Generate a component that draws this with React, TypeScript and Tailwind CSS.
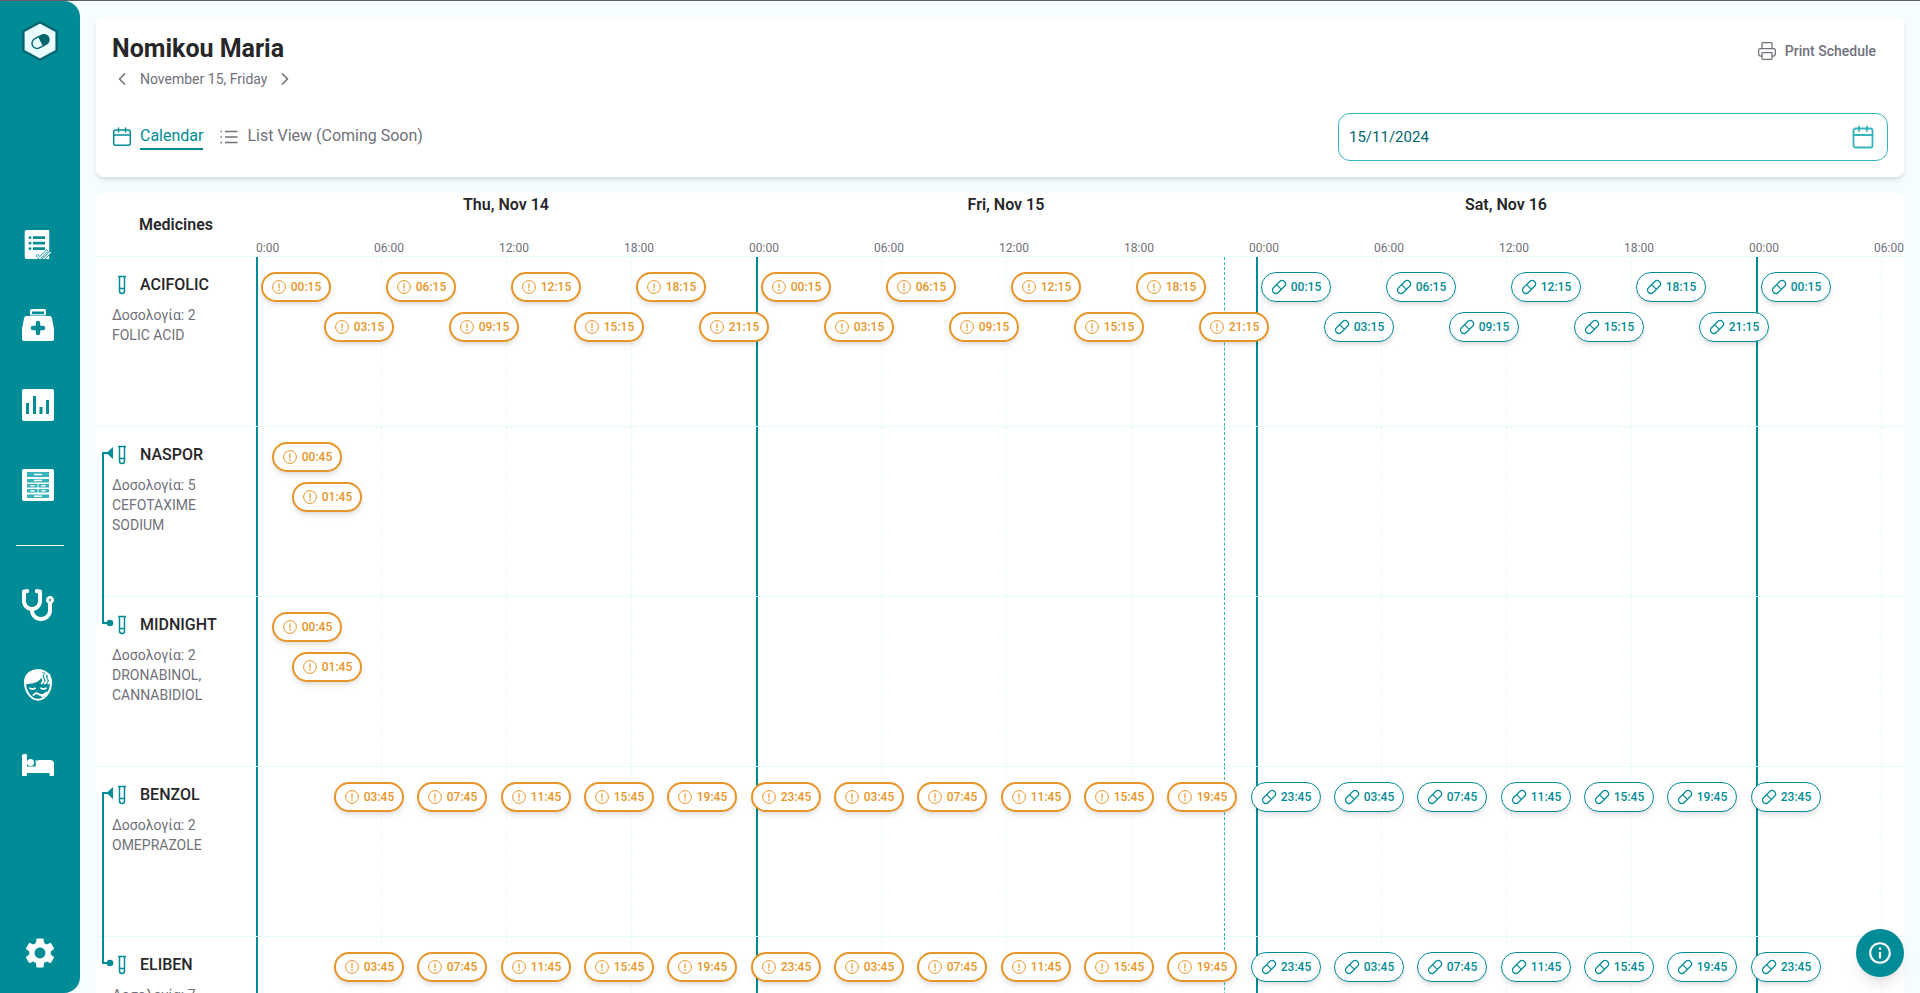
import { useState } from "react";
import { FaStethoscope } from "react-icons/fa";
import { MdInfoOutline, MdSettings } from "react-icons/md";
import { ChevronLeft, ChevronRight, Printer } from "lucide-react";

type Dose = {
    // hours since the start of the timeline
    at: number;
    level: number;
}

type Medicine = {
    name: string;
    dosage: number;
    substance: string;
    linked?: boolean;
    doses: Dose[];
}

const DAY_WIDTH = 500;
const NOW = 46.5;
const DAYS = ["Thu, Nov 14", "Fri, Nov 15", "Sat, Nov 16"];
const TICKS = Array.from({ length: 14 }, (_, i) => i * 6);

const every = (start: number, step: number, count: number, levels: number): Dose[] =>
    Array.from({ length: count }, (_, i) => ({ at: start + i * step, level: i % levels }));

const toX = (hours: number) => Math.round((hours * DAY_WIDTH) / 24);

const toTime = (hours: number) => {
    const h = Math.floor(hours) % 24;
    const m = Math.round((hours % 1) * 60);
    return `${String(h).padStart(2, "0")}:${String(m).padStart(2, "0")}`;
};

const MEDICINES: Medicine[] = [
    { name: "ACIFOLIC", dosage: 2, substance: "FOLIC ACID", doses: every(0.25, 3, 25, 2) },
    { name: "NASPOR", dosage: 5, substance: "CEFOTAXIME SODIUM", linked: true, doses: every(0.75, 1, 2, 2) },
    { name: "MIDNIGHT", dosage: 2, substance: "DRONABINOL, CANNABIDIOL", doses: every(0.75, 1, 2, 2) },
    { name: "BENZOL", dosage: 2, substance: "OMEPRAZOLE", linked: true, doses: every(3.75, 4, 18, 1) },
    { name: "ELIBEN", dosage: 7, substance: "APIXABAN", doses: every(3.75, 4, 18, 1) },
];

const LogoIcon = () => (
    <svg width="36" height="40" viewBox="0 0 36 40">
        <path d="M18 1.2 34.6 10.2V29.8L18 38.8 1.4 29.8V10.2Z" fill="#e9fcfe" stroke="#00666e" strokeWidth="2.4" strokeLinejoin="round" />
        <g transform="rotate(-28 18.5 20.5)">
            <rect x="9.5" y="15.5" width="18" height="10" rx="5" fill="#e9fcfe" stroke="#00666e" strokeWidth="1.4" />
            <path d="M18.5 15.5h4a5 5 0 0 1 0 10h-4z" fill="#00666e" />
        </g>
    </svg>
);

const ChecklistIcon = () => (
    <svg width="32" height="32" viewBox="0 0 32 32" className="overflow-visible">
        <path d="M4.5 1H27.2V30H4.7Q2.7 30 2.7 28V2.8Q2.7 1 4.5 1Z" fill="#fff" />
        <g fill="#008c96">
            <circle cx="8" cy="8.700" r="1.400" />
            <circle cx="8" cy="14.200" r="1.400" />
            <circle cx="8" cy="19.700" r="1.400" />
            <path d="M11 7.300h12v2.800H11zM11 12.800h12v2.800H11zM11 18.300h12v2.800H11z" />
        </g>
        <g fill="#fff" stroke="#008c96" strokeWidth=".9" strokeLinejoin="round">
            <path d="m19.500 28.800 1.300-1.300 1.200 1 6-6.300 1.500 1.400L22 31Z" />
            <path d="m14 26.800 1.500-1.500 2.500 2.300 6.500-6.800 1.600 1.500L18 30.700Z" />
        </g>
    </svg>
);

const MedicalBagIcon = () => (
    <svg width="32" height="32" viewBox="0 0 32 32">
        <path d="M8 7V2q0-2 2-2h12q2 0 2 2v5h4q1.500 0 2 2.500l2 10.500v10q0 2-2 2H2q-2 0-2-2V20L2 9.500Q2.500 7 4 7Z" fill="#fff" />
        <path d="M10 2.500h12v2.500H10z" fill="#008c96" />
        <path d="M7.500 6.200h17" stroke="#008c96" strokeWidth=".8" />
        <path d="M16 14v10M11 19h10" stroke="#008c96" strokeWidth="4.400" strokeLinecap="round" />
    </svg>
);

const ChartIcon = () => (
    <svg width="32" height="32" viewBox="0 0 32 32">
        <rect width="32" height="32" rx="2" fill="#fff" />
        <path d="M4 14h3v11H4zM11 7h3v18h-3zM17.500 18h3v7h-3zM24 11h3v14h-3z" fill="#008c96" />
    </svg>
);

const CabinetIcon = () => (
    <svg width="32" height="32" viewBox="0 0 32 32">
        <rect width="32" height="32" rx="2" fill="#fff" />
        <path
            d="M5 3h22v5H5zM5 10h22v3.500H5zM5 15h10.500v3.500H5zM16.500 15H27v3.500H16.500zM5 20h10.500v3.500H5zM16.500 20H27v3.500H16.500zM5 25.500h22V29H5z"
            fill="#36b3bd"
        />
        <path d="M12 5.500h8M12 11.500h8M8.500 16.700h4M19.500 16.700h4M8.500 21.700h4M19.500 21.700h4M12 27.300h8" stroke="#fff" strokeWidth="1.600" />
    </svg>
);

const FeverIcon = () => (
    <svg width="32" height="32" viewBox="0 0 32 32">
        <path d="M16 1.200C7.500 1.200 3 6.500 3 13.500c0 9 6 17.300 13 17.300s13-8.300 13-17.300C29 6.500 24.500 1.200 16 1.200Z" fill="none" stroke="#fff" strokeWidth="2" />
        <path d="M2.500 15.500C1.500 6 8 .5 16 .5c2 0 4 .4 5.800 1.100C19 4 19.500 8 18.500 10c-3 4-9 4.500-16 5.500Z" fill="#fff" />
        <path d="M21 4.500q-2.500 2.500-.5 5t-1 5M24.300 4.500q-2.500 2.500-.5 5t-1 5M27.500 6q-2 2-.3 4t-.8 4.500" fill="none" stroke="#fff" strokeWidth="1.900" strokeLinecap="round" />
        <path d="M8 19.200q2.500 1.500 5 0M19 19.200q2.500 1.500 5 0" fill="none" stroke="#fff" strokeWidth="1.700" strokeLinecap="round" />
        <path d="M11.500 26q2.500-3 5-1t6 0l2-1.500M20 27.500l4-2" fill="none" stroke="#fff" strokeWidth="1.900" strokeLinecap="round" />
    </svg>
);

const BedIcon = () => (
    <svg width="32" height="32" viewBox="0 0 32 32" fill="#fff">
        <path d="M1.500 5H4q1 0 1 1v11.500h27V26q0 1-1 1h-2.500q-1 0-1-1v-2H5v2q0 1-1 1H1q-1 0-1-1V6.500Q0 5 1.500 5Z" />
        <circle cx="8.500" cy="13.500" r="3.500" />
        <path d="M13.500 11H28q4 0 4 4v3H13.500Z" />
        <path d="M13.300 17V13.500q0-2.500 3.500-2.500" fill="none" stroke="#008c96" strokeWidth=".5" />
    </svg>
);

const CalendarIcon = () => (
    <svg className="size-5" viewBox="0 0 20 20" fill="none" stroke="currentColor" strokeWidth="1.500" strokeLinecap="round">
        <rect x="1.700" y="3" width="16.600" height="15.200" rx="2" />
        <path d="M1.700 8h16.600M6.500 1v4M13.500 1v4" />
    </svg>
);

const DateInputIcon = () => (
    <svg className="size-6" viewBox="0 0 24 24" fill="none" stroke="currentColor" strokeWidth="1.800" strokeLinecap="round">
        <rect x="2.500" y="3.500" width="19" height="19" rx="2" />
        <path d="M2.500 10h19M8 1.500v4.500M16 1.500v4.500" />
    </svg>
);

const ListIcon = () => (
    <svg className="size-5" viewBox="0 0 20 20" fill="none" stroke="currentColor" strokeWidth="1.500">
        <path d="M6 4.500h12.500M6 10h12.500M6 15.500h12.500M1.500 4.500H3M1.500 10H3M1.500 15.500H3" />
    </svg>
);

const TubeIcon = () => (
    <svg className="size-5 shrink-0 text-[#008c96]" viewBox="0 0 20 20" fill="none" stroke="currentColor" strokeWidth="1.500">
        <path d="M6 1.500h8M7.500 1.500v14.500a2.500 2.500 0 0 0 5 0V1.500M7.500 13.500h5" />
    </svg>
);

const MissedIcon = () => (
    <svg className="size-4 shrink-0" viewBox="0 0 16 16" fill="none" stroke="currentColor">
        <circle cx="8" cy="8" r="6.400" />
        <path d="M8 4.800v4" strokeWidth="1.200" strokeLinecap="round" />
        <circle cx="8" cy="11" r=".4" />
    </svg>
);

const PillIcon = () => (
    <svg className="size-4 shrink-0" viewBox="0 0 16 16" fill="none" stroke="currentColor" strokeWidth="1.200">
        <g transform="rotate(-45 8 8)">
            <rect x=".2" y="4.600" width="15.600" height="6.800" rx="3.400" />
            <path d="M8 4.600v6.800" />
        </g>
    </svg>
);

// Joins a medicine with the one in the row under it
const Connector = () => (
    <svg className="absolute left-1.5 top-5 z-10 text-[#008c96]" width="12" height="180" viewBox="0 0 12 180">
        <path d="M6 6H1v170h7" fill="none" stroke="currentColor" strokeWidth="2" />
        <path d="M4.500 6 11 0v12ZM8 172.700a3.300 3.300 0 1 0 0 6.600 3.300 3.300 0 0 0 0-6.600Z" fill="currentColor" />
    </svg>
);

const TOP_LINKS = [
    { label: "Orders", icon: <ChecklistIcon /> },
    { label: "Medicines", icon: <MedicalBagIcon /> },
    { label: "Statistics", icon: <ChartIcon /> },
    { label: "Storage", icon: <CabinetIcon /> },
];

const CARE_LINKS = [
    { label: "Doctors", icon: <FaStethoscope size={32} /> },
    { label: "Patients", icon: <FeverIcon /> },
    { label: "Beds", icon: <BedIcon /> },
];

const Sidebar = () => (
    <aside className="flex w-20 shrink-0 flex-col items-center rounded-r-2xl bg-[#008c96] pb-[22px] pt-5 text-white">
        <a href="#home" aria-label="Home">
            <LogoIcon />
        </a>
        <nav className="mt-[168px] flex flex-col items-center">
            <div className="flex flex-col gap-12 pr-1">
                {TOP_LINKS.map((l) => (
                    <a key={l.label} href="#nav" aria-label={l.label}>
                        {l.icon}
                    </a>
                ))}
            </div>
            <hr className="mb-[43px] mt-11 w-12 border-white" />
            <div className="flex flex-col gap-12 pr-1">
                {CARE_LINKS.map((l) => (
                    <a key={l.label} href="#nav" aria-label={l.label}>
                        {l.icon}
                    </a>
                ))}
            </div>
        </nav>
        <a href="#settings" aria-label="Settings" className="mt-auto">
            <MdSettings size={36} />
        </a>
    </aside>
);

const ScheduleHeader = () => {
    const [date, setDate] = useState("15/11/2024");
    return (
        <header className="flex shrink-0 justify-between rounded-lg bg-white p-4 shadow-md">
            <div className="pb-[11px]">
                <h1 className="text-[25px] leading-8 font-bold text-[#27272a]">Nomikou Maria</h1>
                <div className="mt-1 flex items-center gap-2 text-sm text-[#71717a]">
                    <button aria-label="Previous day">
                        <ChevronLeft size={20} strokeWidth={2} />
                    </button>
                    <span>November 15, Friday</span>
                    <button aria-label="Next day">
                        <ChevronRight size={20} strokeWidth={2} />
                    </button>
                </div>
                <div className="mt-[35px] flex items-start gap-4 text-[#71717a]">
                    <button className="flex items-center gap-2 text-[#008c96]">
                        <CalendarIcon />
                        <span className="border-b-2 border-[#008c96]">Calendar</span>
                    </button>
                    <button className="flex items-center gap-2">
                        <ListIcon />
                        <span className="border-b-2 border-transparent">List View (Coming Soon)</span>
                    </button>
                </div>
            </div>
            <div className="flex flex-col items-end justify-between">
                <button className="flex h-9 items-center gap-2 px-3 text-sm font-medium text-[#71717a]">
                    <Printer size={20} strokeWidth={1.5} />
                    Print Schedule
                </button>
                <label className="flex h-12 w-[550px] items-center rounded-xl border border-[#36b3bd] pl-2.5 pr-3 text-[#36b3bd]">
                    <input
                        aria-label="Date"
                        className="min-w-0 flex-1 text-[15px] text-[#00666e] outline-none"
                        value={date}
                        onChange={(e) => setDate(e.target.value)}
                    />
                    <DateInputIcon />
                </label>
            </div>
        </header>
    );
};

const TimelineHeader = () => (
    <div className="flex h-16 shrink-0 border-b border-[#e6fbfb]">
        <div className="flex w-40 shrink-0 items-center justify-center font-semibold text-[#27272a]">Medicines</div>
        <div className="flex min-w-0 flex-1 flex-col justify-between overflow-hidden">
            <div className="flex">
                {DAYS.map((d) => (
                    <h2 key={d} className="w-[500px] shrink-0 text-center font-semibold text-[#27272a]">
                        {d}
                    </h2>
                ))}
            </div>
            <div className="flex text-xs text-[#71717a]">
                <span className="w-[118px] shrink-0">0:00</span>
                {TICKS.slice(1).map((t) => (
                    <span key={t} className="w-[125px] shrink-0">
                        {toTime(t)}
                    </span>
                ))}
            </div>
        </div>
    </div>
);

const DoseChip = ({ dose }: { dose: Dose }) => {
    const missed = dose.at < NOW;
    return (
        <button
            className={`absolute flex h-[30px] w-[70px] items-center justify-center gap-1 rounded-full bg-white text-xs font-medium shadow-md ${
                missed ? "border-2 border-[#e99426] text-[#e99426]" : "border border-[#008c96] text-[#008c96]"
            }`}
            style={{ left: toX(dose.at), top: 15 + dose.level * 40 }}
        >
            {missed ? <MissedIcon /> : <PillIcon />}
            {toTime(dose.at)}
        </button>
    );
};

const MedicineRow = ({ medicine }: { medicine: Medicine }) => (
    <div className="relative flex h-[170px] shrink-0 border-b border-[#e6fbfb]">
        {medicine.linked && <Connector />}
        <div className="w-40 shrink-0 px-4 pt-4">
            <div className="flex items-center gap-2">
                <TubeIcon />
                <h3 className="font-medium text-[#27272a]">{medicine.name}</h3>
            </div>
            <p className="mt-2 text-sm text-[#71717a]">Δοσολογία: {medicine.dosage}</p>
            <p className="text-sm text-[#71717a]">{medicine.substance}</p>
        </div>
        <div className="relative flex min-w-0 flex-1 overflow-hidden">
            {TICKS.map((t) => (
                <div
                    key={t}
                    className={`w-[125px] shrink-0 ${
                        t % 24 === 0 ? "border-l-2 border-[#008c96]" : "border-l border-dashed border-[#e6fbfb]"
                    }`}
                />
            ))}
            <div className="absolute inset-y-0 border-l border-dashed border-[#36b3bd]" style={{ left: toX(NOW) - 1 }} />
            {medicine.doses.map((d) => (
                <DoseChip key={d.at} dose={d} />
            ))}
        </div>
    </div>
);

const App = () => (
    <div className="flex h-screen overflow-hidden border-t border-[#625f66] bg-[#f5feff] font-[Roboto,sans-serif]">
        <Sidebar />
        <main className="flex min-w-0 flex-1 flex-col gap-4 px-4 pt-4">
            <ScheduleHeader />
            <section className="flex min-h-0 flex-1 flex-col overflow-hidden rounded-t-lg bg-white">
                <TimelineHeader />
                {MEDICINES.map((m) => (
                    <MedicineRow key={m.name} medicine={m} />
                ))}
            </section>
        </main>
        <button
            aria-label="Info"
            className="fixed bottom-4 right-4 z-20 flex size-12 items-center justify-center rounded-full bg-[#008c96] text-white shadow-lg"
        >
            <MdInfoOutline size={26} />
        </button>
    </div>
);

export default App;
